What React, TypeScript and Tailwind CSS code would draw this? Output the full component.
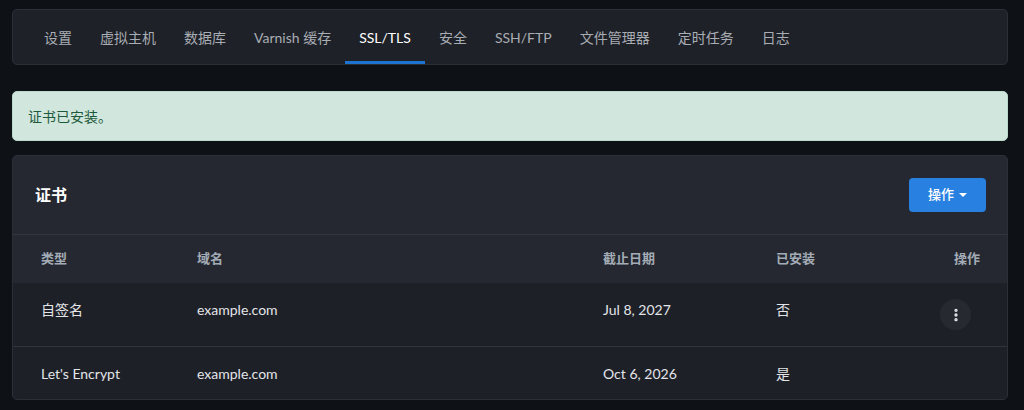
import { EllipsisVertical } from "lucide-react";

const tabs = ["设置", "虚拟主机", "数据库", "Varnish 缓存", "SSL/TLS", "安全", "SSH/FTP", "文件管理器", "定时任务", "日志"];

const certs = [
  { type: "自签名", domain: "example.com", expires: "Jul 8, 2027", installed: "否", menu: true },
  { type: "Let's Encrypt", domain: "example.com", expires: "Oct 6, 2026", installed: "是", menu: false },
];

const cols = "grid grid-cols-[156px_406px_173px_1fr_auto] pl-[28px] pr-[27px]";

export default function App() {
  return (
    <div
      className="min-h-[410px] bg-[#0e1116] pl-3 pr-4 pt-[9px] text-[14px]"
      style={{ fontFamily: 'Lato, "Noto Sans CJK SC", sans-serif' }}
    >
      {/* tabs */}
      <div className="flex h-[56px] rounded-[5px] border border-[#2c2f37] bg-[#1e2128] px-[17px]">
        {tabs.map(tab => (
          <div
            key={tab}
            className={
              tab === "SSL/TLS"
                ? "flex items-center border-b-[3px] border-[#1c74d0] px-[14px] pt-[3px] text-white"
                : "flex items-center border-b-[3px] border-transparent px-[14px] pt-[3px] text-[#a9adb4]"
            }
          >
            {tab}
          </div>
        ))}
      </div>

      {/* success alert */}
      <div className="mt-[26px] flex h-[50px] items-center rounded-[5px] border border-[#badbcc] bg-[#d1e7dd] px-[15px] text-[#1d5a3c]">
        证书已安装。
      </div>

      {/* certificates card */}
      <div className="mt-[14px] overflow-hidden rounded-[5px] border border-[#2c2f37] bg-[#252830]">
        <div className="flex h-[79px] items-center justify-between border-b border-[#33363e] pl-[22px] pr-[21px]">
          <h2 className="text-[16px] font-bold text-white">证书</h2>
          <button className="flex h-[34px] w-[77px] items-center justify-center gap-[5px] rounded-[4px] bg-[#2880e0] text-[13px] font-medium text-white">
            操作
            <span className="border-x-[4px] border-t-[4px] border-x-transparent border-t-white" />
          </button>
        </div>

        <div className={`${cols} h-[48px] items-center text-[13px] font-bold text-[#a3acb6]`}>
          <div>类型</div>
          <div>域名</div>
          <div>截止日期</div>
          <div>已安装</div>
          <div className="text-right">操作</div>
        </div>

        {certs.map((c, i) => (
          <div
            key={i}
            className={`${cols} items-start bg-[#1e2028] pt-[16px] leading-[22px] text-[#e3e5e8] ${i === 0 ? "border-b border-[#30333b] pb-[16px]" : "pb-[14px]"}`}
          >
            <div>{c.type}</div>
            <div>{c.domain}</div>
            <div>{c.expires}</div>
            <div>{c.installed}</div>
            <div className="flex justify-end">
              {c.menu && (
                <button className="mr-[9px] flex h-[31px] w-[31px] items-center justify-center rounded-full bg-[#262930] text-[#e6e8eb]">
                  <EllipsisVertical size={16} strokeWidth={3} />
                </button>
              )}
            </div>
          </div>
        ))}
      </div>
    </div>
  );
}
